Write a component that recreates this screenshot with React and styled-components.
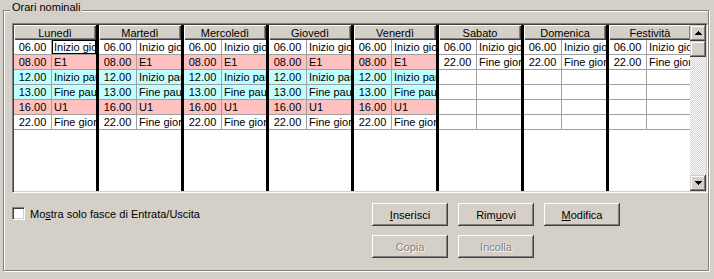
import styled, { createGlobalStyle } from "styled-components";

const GlobalStyle = createGlobalStyle`
  body {
    margin: 0;
    background: #d4d0c8;
    font-family: "Liberation Sans", Arial, sans-serif;
    font-size: 11px;
    color: #000;
  }
`;

const StyledWindow = styled.div`
  width: 714px;
  height: 279px;
  box-sizing: border-box;
  padding: 0 5px 0 3px;
  background: #d4d0c8;
`;

const StyledGroup = styled.fieldset`
  margin: 0;
  min-width: 0;
  height: 271px;
  box-sizing: border-box;
  border: 1px solid #808080;
  box-shadow: inset 1px 1px 0 #fff, 1px 1px 0 #fff;
  padding: 3px 0 0 8px;
`;

const StyledLegend = styled.legend`
  margin-left: -2px;
  padding: 0 2px 6px;
  line-height: 14px;
  background: #d4d0c8;
`;

const StyledGrid = styled.div`
  display: flex;
  height: 170px;
  box-sizing: border-box;
  border: 1px solid;
  border-color: #808080 #fff #fff #808080;
  box-shadow: inset 1px 1px 0 #404040, inset -1px -1px 0 #d4d0c8;
  padding: 1px;
  background: #fff;
`;

const StyledDays = styled.div`
  display: flex;
  flex: 1;
  min-width: 0;
  overflow: hidden;
`;

const StyledDay = styled.div`
  flex: 0 0 82px;
  min-width: 0;
  overflow: hidden;
  display: flex;
  flex-direction: column;
  & + & {
    border-left: 3px solid #000;
  }
`;

const StyledHead = styled.div`
  height: 15px;
  line-height: 16px;
  text-align: center;
  white-space: nowrap;
  overflow: hidden;
  background: #d4d0c8;
  box-shadow: inset 1px 1px 0 #fff, inset -1px -1px 0 #404040,
    inset -2px -2px 0 #808080;
`;

const StyledRow = styled.div`
  display: flex;
  height: 15px;
  box-sizing: border-box;
  border-bottom: 1px solid #a0a0a0;
  background: ${({ $tone }) => $tone};
`;

const StyledTime = styled.div`
  flex: 0 0 37px;
  border-right: 1px solid #a0a0a0;
  text-align: center;
  line-height: 14px;
`;

const StyledDesc = styled.div`
  flex: 1;
  min-width: 0;
  padding-left: 2px;
  line-height: 14px;
  white-space: nowrap;
  overflow: hidden;
  outline: ${({ $focus }) => ($focus ? "1px solid #000" : "none")};
  outline-offset: -1px;
`;

const StyledScroll = styled.div`
  flex: 0 0 16px;
  display: flex;
  flex-direction: column;
  background: repeating-conic-gradient(#fff 0 25%, #d4d0c8 0 50%) 0 0 / 2px
    2px;
`;

const StyledScrollButton = styled.div`
  height: 16px;
  display: flex;
  align-items: center;
  justify-content: center;
  background: #d4d0c8;
  box-shadow: inset -1px -1px 0 #404040, inset 1px 1px 0 #d4d0c8,
    inset -2px -2px 0 #808080, inset 2px 2px 0 #fff;
`;

const StyledTrack = styled.div`
  flex: 1;
`;

const StyledBottom = styled.div`
  display: flex;
  margin-top: 10px;
`;

const StyledCheck = styled.label`
  flex: 0 0 360px;
  display: flex;
  align-items: center;
  gap: 5px;
  height: 13px;
  margin-top: 4px;
`;

const StyledBox = styled.span`
  width: 13px;
  height: 13px;
  box-sizing: border-box;
  background: #fff;
  border: 1px solid;
  border-color: #808080 #fff #fff #808080;
  box-shadow: inset 1px 1px 0 #404040, inset -1px -1px 0 #d4d0c8;
`;

const StyledButtons = styled.div`
  display: grid;
  grid-template-columns: repeat(3, 76px);
  column-gap: 10px;
  row-gap: 9px;
`;

const StyledButton = styled.button`
  height: 23px;
  padding: 0;
  border: none;
  background: #d4d0c8;
  font: inherit;
  color: ${({ disabled }) => (disabled ? "#808080" : "#000")};
  text-shadow: ${({ disabled }) => (disabled ? "1px 1px 0 #fff" : "none")};
  box-shadow: inset -1px -1px 0 #404040, inset 1px 1px 0 #fff,
    inset -2px -2px 0 #808080, inset 2px 2px 0 #d4d0c8;
  u {
    text-decoration-thickness: 1px;
  }
`;

const PINK = "#ffc0c0";
const CYAN = "#c0ffff";
const WHITE = "#fff";

const weekday = [
  ["06.00", "Inizio giornata", WHITE],
  ["08.00", "E1", PINK],
  ["12.00", "Inizio pausa", CYAN],
  ["13.00", "Fine pausa", CYAN],
  ["16.00", "U1", PINK],
  ["22.00", "Fine giornata", WHITE],
];

const holiday = [
  ["06.00", "Inizio giornata", WHITE],
  ["22.00", "Fine giornata", WHITE],
  ["", "", WHITE],
  ["", "", WHITE],
  ["", "", WHITE],
  ["", "", WHITE],
];

const days = [
  ["Lunedì", weekday],
  ["Martedì", weekday],
  ["Mercoledì", weekday],
  ["Giovedì", weekday],
  ["Venerdì", weekday],
  ["Sabato", holiday],
  ["Domenica", holiday],
  ["Festività", holiday],
];

function Arrow({ down }) {
  return (
    <svg width="7" height="4" viewBox="0 0 7 4">
      <path
        d={down ? "M0 0h7v1H6v1H5v1H4v1H3V3H2V2H1V1H0z" : "M3 0h1v1h1v1h1v1h1v1H0V3h1V2h1V1h1z"}
        fill="#000"
      />
    </svg>
  );
}

export default function App() {
  return (
    <StyledWindow>
      <GlobalStyle />
      <StyledGroup>
        <StyledLegend>Orari nominali</StyledLegend>
        <StyledGrid>
          <StyledDays>
            {days.map(([name, rows], d) => (
              <StyledDay key={name}>
                <StyledHead>{name}</StyledHead>
                {rows.map(([time, label, tone], r) => (
                  <StyledRow key={r} $tone={tone}>
                    <StyledTime>{time}</StyledTime>
                    <StyledDesc $focus={d === 0 && r === 0}>{label}</StyledDesc>
                  </StyledRow>
                ))}
              </StyledDay>
            ))}
          </StyledDays>
          <StyledScroll>
            <StyledScrollButton>
              <Arrow />
            </StyledScrollButton>
            <StyledScrollButton />
            <StyledTrack />
            <StyledScrollButton>
              <Arrow down />
            </StyledScrollButton>
          </StyledScroll>
        </StyledGrid>
        <StyledBottom>
          <StyledCheck>
            <StyledBox />
            <span>
              Mo<u>s</u>tra solo fasce di Entrata/Uscita
            </span>
          </StyledCheck>
          <StyledButtons>
            <StyledButton>
              <u>I</u>nserisci
            </StyledButton>
            <StyledButton>
              Rim<u>u</u>ovi
            </StyledButton>
            <StyledButton>
              <u>M</u>odifica
            </StyledButton>
            <StyledButton disabled>Copia</StyledButton>
            <StyledButton disabled>Incolla</StyledButton>
          </StyledButtons>
        </StyledBottom>
      </StyledGroup>
    </StyledWindow>
  );
}
